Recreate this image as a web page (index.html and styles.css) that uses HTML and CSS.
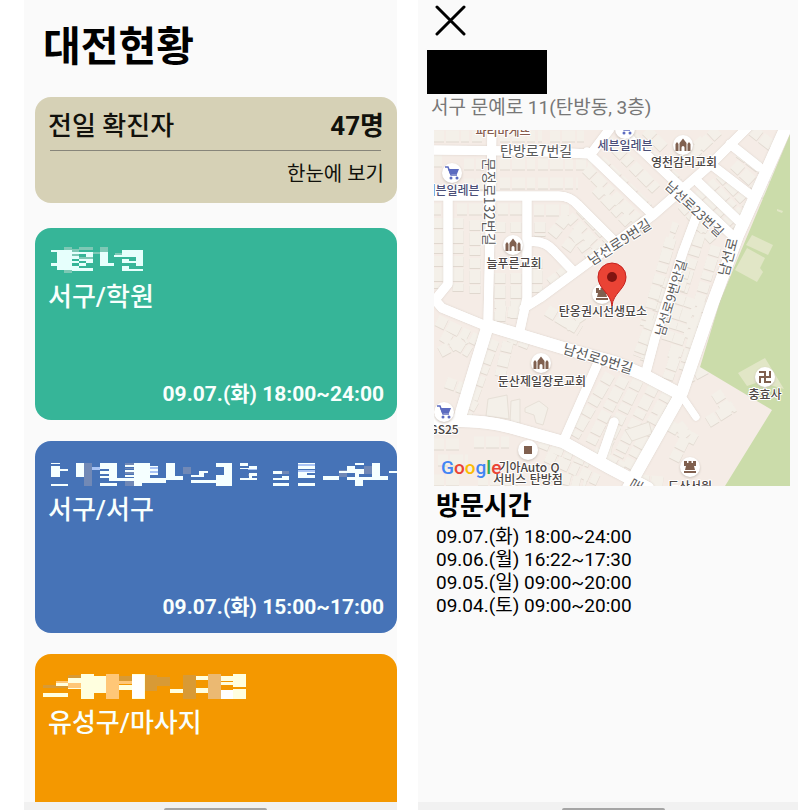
FILE: index.html
```html
<!DOCTYPE html>
<html lang="ko">
<head>
<meta charset="utf-8">
<meta name="viewport" content="width=device-width, initial-scale=1">
<title>대전현황</title>
<link rel="stylesheet" href="styles.css">
</head>
<body>
<div class="screens">
  <main class="screen">
    <div class="list">
      <h1 class="title">대전현황</h1>
      <section class="summary">
        <div class="summary-row"><span>전일 확진자</span><strong>47명</strong></div>
        <hr>
        <a class="summary-link" href="#all">한눈에 보기</a>
      </section>

      <article class="card green">
        <svg class="masked" viewBox="15 81 1086 81" aria-hidden="true">
          <g fill="#7ec8b5"><path d="M103 81h22v8h-22zM125 88h22v7h-22zM147 81h42v10h-42zM211 82h22v14h-22zM103 151h22v8h-22zM189 96h44v6h-44zM147 110h42v6h-42zM125 103h22v6h-22zM275 150h64v4h-64zM254 100h22v4h-22zM297 103h20v6h-20z"/></g>
          <path fill="#e6fffc" d="M62 89h63v62H82v-14H62v-7h20V96H62zM125 95h22v8h-22zM125 109h22v9h-22zM125 123h22v7h-22zM125 137h22v15h-22zM147 96h42v7h-42zM168 103h21v7h-21zM147 116h42v7h-42zM147 130h21v7h-21zM168 123h21v7h-21zM147 145h42v7h-42zM211 96h22v34h20v7h-42zM276 89h63v48h-21v-26h-65v-7h23zM276 118h22v5h20v7h-42zM276 139h22v7h41v6h-63z"/>
        </svg>
        <h2>서구/학원</h2>
        <time>09.07.(화) 18:00~24:00</time>
      </article>

      <article class="card blue">
        <svg class="masked" viewBox="15 75 1086 81" aria-hidden="true">
          <path fill="#7189b6" d="M163 84h24v70h-24zM285 84h26v7h-26zM285 98h26v5h-26zM285 112h26v6h-26zM285 136h26v18h-26zM458 96h24v20h-24zM655 118h27v6h-27zM755 108h22v8h-22zM926 104h26v22h-26zM1002 92h24v26h-24z"/>
          <path fill="#a9c4f5" d="M187 96h24v10h-24zM359 96h26v5h-26zM359 108h26v5h-26zM804 88h50v5h-50zM804 105h50v5h-50zM830 120h24v8h-24zM236 130h50v4h-50zM655 100h26v5h-26z"/>
          <path fill="#f5ffff" d="M63 84h26v3H63zM63 94h26v9h25v5H89v18H63zM63 146h51v8H63zM137 84h26v41h-26zM211 84h50v45h50v8h-75v-8h-25v-7h25v-6h-25v-8h25v-6h-25zM211 145h50v9h-50zM285 91h26v5h-26zM285 105h26v5h-26zM285 120h26v5h-26zM311 84h48v8h26v4h-26v5h26v6h-26v6h26v7h-26v9h50V84h26v40h24v10h-50v10h-73v10h-25zM482 120h25v-13h26v8h-12v11h-39zM482 136h75v-15h25V96h-25V84h50v70h-50v-10h-75zM631 84h24v8h-24zM631 99h25v-6h25v10h-50zM631 129h25v-14h25v7h-14v7h14v6h-50zM730 107h25v9h-25zM730 129h25v-6h22v12h-47zM730 145h47v9h-47zM804 84h50v4h-50zM804 93h50v10h-50zM804 112h26v9h24v-7h-24v-4h24v20h-50zM804 145h50v9h-50zM878 124h50v10h-50zM928 108h24v-16h24v-8h26v5h-26v12h26v16h-14v8h38V84h24v40h24v10h-74v20h-26v-20h-24v-9h24v-11h-48zM1076 107h27v8h-27z"/>
        </svg>
        <h2>서구/서구</h2>
        <time>09.07.(화) 15:00~17:00</time>
      </article>

      <article class="card orange">
        <svg class="masked" viewBox="45 99 1086 81" aria-hidden="true">
          <path fill="#d89a35" d="M69 136h76v8H69zM145 106h38v7h-38zM297 108h38v20h-38zM374 106h38v48h-38zM412 110h38v28h-38zM489 104h38v73h-38z"/>
          <path fill="#ffc777" d="M108 124h37v6h-37zM145 130h38v14h-38zM258 102h39v75h-39zM297 122h38v9h-38z"/>
          <path fill="#ebb972" d="M564 102h39v75h-39z"/>
          <path fill="#ffffdf" d="M69 158h76v12H69zM108 130h37v8h-37zM145 114h38v-12h39v7h36v50h-36v18h-39v-29h-38v-5h38v-13h-38zM297 136h38v-34h39v75h-39v-26h-38zM450 147h39v12h-39zM527 108h37v11h-37zM527 144h37v14h-37zM603 109h37v-7h38v40h-38v-7h-37v-8h37v-4h-37zM603 150h37v-3h38v30h-75z"/>
          <path fill="#fff" d="M337 104h35v71h-35zM603 151h37v25h-37z"/>
        </svg>
        <h2>유성구/마사지</h2>
      </article>
    </div>
    <div class="navbar"><span class="handle"></span></div>
  </main>

  <section class="screen">
    <div class="detail">
      <button class="close" type="button" aria-label="닫기">
        <svg viewBox="0 0 32 32" aria-hidden="true"><path d="M2 2l27 27M29 2L2 29"/></svg>
      </button>
      <div class="redacted"></div>
      <p class="address">서구 문예로 11(탄방동, 3층)</p>
      <svg class="map" viewBox="0 0 356 356" role="img" aria-label="지도">
        <defs>
          <g id="church" fill="#80604f">
            <path d="M-3.500 6V-2L0-6.500L3.500-2V6H1.500V2.500a1.500 1.500 0 0 0-3 0V6zM-7.500 6V-1l1.500-2L-4.500-1V6zM4.500 6V-1l1.500-2L7.500-1V6z"/>
          </g>
          <g id="castle" fill="#80604f">
            <path d="M-6-6h3v2h1.500v-2h3v2H3v-2h3V-1H4l1 4H-5l1-4h-2zM-6 4H6v2H-6z"/>
          </g>
          <g id="cart">
            <path d="M-7-6h3l3 8h6" fill="none" stroke="#5c6bc0" stroke-width="1.500"/>
            <path d="M-4-4H7L5 1h-7z" fill="#5c6bc0"/>
            <circle cx="-1" cy="5" r="1.500" fill="#5c6bc0"/><circle cx="5" cy="5" r="1.500" fill="#5c6bc0"/>
          </g>
        </defs>
        <rect width="356" height="356" fill="#f5ece6"/>

        <g class="lots">
          <path d="M0 6h50M66 6h42M116 6h34M0 31h8M30 34h20M66 34h92M0 79h7M30 54h20M66 53h78M23 79h26M64 79h24M100 80h36M4 88v70M24 88v74M41 90v76M66 92v10M82 92v10M66 143v52M82 143v45M106 92v14M103 128v34"/>
          <path d="M118 105l16-20 34 36M132 119l10-14 16 22M116 153l18-14M152 38l62 62M166 30l48 48M172 8l50 51M190 -2l54 54M212 0l18 18M162 58l38 40M146 78l32 34"/>
          <path d="M270 10l-22 20M284 0l-34 32M305 22l38 28M300 34l32 30M318 0l28 22M286 44l30 32M275 52l35 38M264 60l35 38M248 74l32 36"/>
          <path d="M240 92l-12 30M270 92l-38 120M282 116l-28 92M234 148l-26 84M270 172l-20 68M258 168l-20 62M245 216l-12 34"/>
          <path d="M3 190l40 20M8 205l28 17M60 210l-28 76M74 212l-8 34M62 180l24 3M103 185l40 22M130 186l32 18M75 206l20 8M12 252l22 8M40 270l-10 18"/>
          <path d="M176 244l-36 62M190 248l-34 66M204 250l-30 62M220 256l-36 70M234 262l-42 78M6 222l26-14M176 300l-6 30M160 322l30 16"/>
          <path d="M0 314h26M4 330h30M40 312h36M106 312l50 20M112 326l52 24M112 344l40 10M44 350h40M0 350h26M205 350l24 2"/>
          <path d="M222 288l40 22M250 250l26-14M274 292l26-16M240 330l12-24M282 262l14 22M244 294l10 12"/>
        </g>
        <g fill="#f4f0e9" stroke="#e7e0d7">
          <path d="M54 269l19-4 2 24-23-3zM77 271l9-2v24h-10zM91 278l14-7 9 7-5 17-7-2-2-8-9-3zM191 300l24-8 3 12-20 7zM134 190l14 2v14h-14z"/>
        </g>
        <path fill="#f5ece6" d="M107 176l73-53 40-26 19-8-13 54-15 63-6 29-77-20-39-20z"/>
        <g class="lots">
          <path d="M113 180l33 20M131 196l18-12M237 108l-26 88M218 190l-14 36M251 138l-6 22"/>
        </g>

        <path fill="#cbdcaa" d="M356 4L286 171 266 237 338 280 291 356H356z"/>
        <path fill="#e1e6c6" d="M318 105l21 10-5 10-22-10zM313 118l18 10-5 10 3 4-6 10-22-12zM304 243l27-15 19 31-25-7-12 4zM343 79l6 2-1 2-5-2z"/>

        <g class="roads edge">
          <path id="narrow" d="M-5 20L90 21L157 24L178 -4M58 -5L57 60L54 190M-5 66H125Q136 66 144 75L180 111M14 67V154L1 170L8 178L52 196M93 67V168L86 200M93 112Q110 109 120 121L140 142M185 -5L199 12L302 109M316 -5L276 35L219 85L106 168L90 178M153 22L216 82M296 14L325 37M279 36L318 66M262 50L308 94M264 82L249 122L221 208L212 242M163 235L129 312M180 292L166 332"/>
          <path id="wide" d="M53 195L129 218L180 232L210 245L246 264M54 195L25 290M0 291Q50 289 79 298L129 312L176 338L214 358M357 -14L304 105L278 175L248 262L203 342L192 362"/>
          <path id="stub" d="M249 268L262 287"/>
        </g>
        <g class="roads">
          <use href="#narrow"/><use href="#wide"/><use href="#stub"/>
        </g>

        <g class="road-label">
          <text x="66" y="26">탄방로7번길</text>
          <text transform="translate(50 28) rotate(90)">문정로132번길</text>
          <text transform="translate(158 136) rotate(-33)">남선로9번길</text>
          <text class="small" transform="translate(230 57) rotate(43)">남선로23번길</text>
          <text transform="translate(294 147) rotate(-75)">남선로</text>
          <text class="small" transform="translate(230 207) rotate(-73)">남선로9번안길</text>
          <text transform="translate(128 223) rotate(17)">남선로9번길</text>
          <text transform="translate(204 363) rotate(-60)">로</text>
        </g>

        <g class="spots">
          <circle cx="79" cy="115" r="10"/><circle cx="249" cy="15" r="10"/><circle cx="107" cy="233" r="10"/>
          <circle cx="168" cy="164" r="10"/><circle cx="256" cy="337" r="10"/><circle cx="18" cy="43" r="10"/>
          <circle cx="10" cy="282" r="10"/><circle cx="191" cy="-1" r="10"/><circle cx="94" cy="320" r="10"/><circle cx="331" cy="247" r="10"/>
        </g>
        <use href="#church" x="79" y="115"/><use href="#church" x="249" y="15"/><use href="#church" x="107" y="233"/>
        <use href="#castle" x="168" y="164"/><use href="#castle" x="256" y="337"/>
        <use href="#cart" x="18" y="43"/><use href="#cart" x="10" y="282"/><use href="#cart" x="191" y="-2"/>
        <path fill="#80604f" d="M90 316h8v8h-8z"/>
        <path class="temple" d="M331 242v10M326 247h10M326 242h5M326 247v5M331 252h5M336 242v5"/>

        <g class="place">
          <text class="food" x="69" y="6">파리바게뜨</text>
          <text class="shop" x="191" y="20">세븐일레븐</text>
          <text class="shop" x="18" y="65">세븐일레븐</text>
          <text x="250" y="37">영천감리교회</text>
          <text x="80" y="138">늘푸른교회</text>
          <text x="169" y="186">탄옹권시선생묘소</text>
          <text x="108" y="256">둔산제일장로교회</text>
          <text x="331" y="269">충효사</text>
          <text x="10" y="304">GS25</text>
          <text x="95" y="342">기아Auto Q</text>
          <text x="94" y="354">서비스 탄방점</text>
          <text x="256" y="361">도산서원</text>
        </g>

        <path fill="#ea4335" stroke="#c5221f" stroke-width="1" d="M178 176C177 163 164 159 164 147a14 14 0 0 1 28 0C192 159 179 163 178 176z"/>
        <circle cx="178" cy="147" r="5" fill="#811411"/>
        <text class="google" x="7" y="344"><tspan fill="#4285f4">G</tspan><tspan fill="#ea4335">o</tspan><tspan fill="#fbbc05">o</tspan><tspan fill="#4285f4">g</tspan><tspan fill="#34a853">l</tspan><tspan fill="#ea4335">e</tspan></text>
      </svg>
      <h2 class="visit-title">방문시간</h2>
      <ul class="visits">
        <li>09.07.(화) 18:00~24:00</li>
        <li>09.06.(월) 16:22~17:30</li>
        <li>09.05.(일) 09:00~20:00</li>
        <li>09.04.(토) 09:00~20:00</li>
      </ul>
    </div>
    <div class="navbar"><span class="handle"></span></div>
  </section>
</div>
</body>
</html>
```
FILE: styles.css
```css
* { box-sizing: border-box; }
body, h1, h2, p, ul { margin: 0; padding: 0; }
body {
  background: #fff;
  color: #000;
  font-family: Roboto, "Noto Sans CJK KR", sans-serif;
}
.screens {
  display: grid;
  grid-template-columns: 373fr 380fr;
  column-gap: 21px;
  height: 100vh;
  padding-left: 24px;
  overflow: hidden;
}
.screen {
  display: flex;
  flex-direction: column;
  min-width: 0;
  min-height: 0;
  background: #fafafa;
}
.list, .detail { flex: 1; min-height: 0; overflow: hidden; }
.list {
  display: flex;
  flex-direction: column;
  padding: 17px 0 0 11px;
}
.title {
  flex: none;
  margin-bottom: 20px;
  padding-left: 8px;
  font-size: 41px;
  line-height: 60px;
  font-weight: 700;
}
.summary {
  flex: none;
  margin-bottom: 25px;
  padding: 9px 13px 0;
  height: 106px;
  border-radius: 16px;
  background: #d6d1b6;
  color: #11110c;
}
.summary-row {
  display: flex;
  justify-content: space-between;
  font-size: 26px;
  line-height: 40px;
  font-weight: 500;
}
.summary-row strong { font-weight: 700; }
.summary hr {
  margin: 4px 3px 8px 2px;
  border: 0;
  border-top: 1px solid #87857a;
}
.summary-link {
  display: block;
  color: inherit;
  font-size: 20px;
  line-height: 30px;
  text-align: right;
  text-decoration: none;
}
.card {
  display: flex;
  flex: none;
  flex-direction: column;
  height: 192px;
  margin-bottom: 21px;
  padding-top: 19px;
  border-radius: 16px;
  color: #f8fffd;
}
.green { background: #36b598; }
.blue { background: #4673b7; }
.orange { background: #f49800; }
.masked { display: block; width: 100%; overflow: visible; shape-rendering: crispEdges; }
.card h2 {
  padding: 3px 13px 0;
  font-size: 26px;
  line-height: 40px;
  font-weight: 500;
}
.card time {
  margin-top: auto;
  padding: 0 13px 10px;
  font-size: 21px;
  line-height: 32px;
  font-weight: 700;
  text-align: right;
}
.navbar {
  display: flex;
  flex: none;
  justify-content: center;
  align-items: flex-end;
  height: 8px;
  padding-left: 10px;
  background: #f1f1f1;
}
.handle { width: 103px; height: 2px; border-radius: 2px 2px 0 0; background: #a5a5a5; }

.detail { padding: 5px 8px 0 9px; }
.close {
  display: block;
  width: 32px;
  height: 32px;
  margin: 0 0 13px 8px;
  padding: 0;
  border: 0;
  background: none;
}
.close svg { display: block; fill: none; stroke: #000; stroke-width: 3; stroke-linecap: round; }
.redacted { width: 120px; height: 44px; background: #000; }
.address {
  padding: 1px 0 0 4px;
  color: #777;
  font-size: 19px;
  line-height: 26px;
  margin-bottom: 9px;
}
.map { display: block; width: calc(100% - 7px); margin-left: 7px; overflow: hidden; }
.visit-title {
  padding: 1px 0 0 9px;
  font-size: 26px;
  line-height: 38px;
  font-weight: 700;
}
.visits {
  padding-left: 9px;
  list-style: none;
  font-size: 19px;
  line-height: 23px;
}

.lots path {
  fill: none;
  stroke: #f4f0e9;
  stroke-width: 11;
  stroke-dasharray: 10 2 13 2 8 3;
}
.lots { filter: drop-shadow(0 1px 0 #e0d8cf); }
.roads { fill: none; stroke: #fff; stroke-linejoin: round; stroke-linecap: round; }
.roads.edge { filter: drop-shadow(0 0 1px #d8cfc8); }
#narrow { stroke-width: 9; }
#wide { stroke-width: 12; }
#stub { stroke-width: 7; }
.road-label, .place {
  font-family: "Noto Sans CJK KR", sans-serif;
  paint-order: stroke;
  stroke: #fff;
  stroke-width: 2px;
  stroke-linejoin: round;
}
.road-label { fill: #5a5a5a; font-size: 14px; }
.road-label .small { font-size: 13px; }
.place { fill: #4b4543; font-size: 12px; font-weight: 500; text-anchor: middle; }
.place .shop { fill: #4b4f78; }
.place .food { fill: #875b4c; }
.spots { fill: #fff; filter: drop-shadow(0 1px 1px #c9c0b8); }
.temple { fill: none; stroke: #80604f; stroke-width: 2; stroke-linecap: square; }
.google { font: 500 19px Roboto, sans-serif; }
```
